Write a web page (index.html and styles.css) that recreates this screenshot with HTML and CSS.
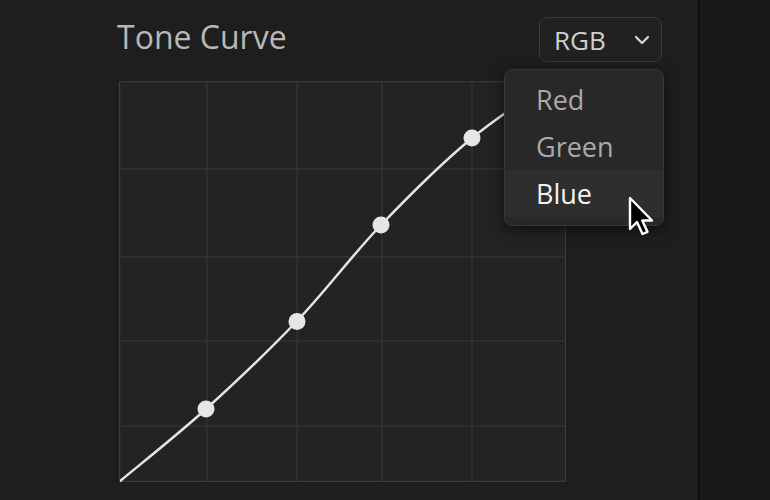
FILE: index.html
```html
<!DOCTYPE html>
<html>
<head>
<meta charset="utf-8">
<link rel="stylesheet" href="styles.css">
</head>
<body>
<div class="app">
  <section class="panel">
    <header class="header">
      <h1 class="title">Tone Curve</h1>
      <button class="select">
        <span class="select-label">RGB</span>
        <svg class="chevron" width="16" height="10" viewBox="0 0 16 10"><path d="M2 2 L8 8 L14 2" fill="none" stroke="#d8d8d8" stroke-width="2.2" stroke-linecap="round" stroke-linejoin="round"/></svg>
      </button>
    </header>
    <div class="graph">
      <svg width="450" height="403" viewBox="117 80 450 403">
        <defs>
          <clipPath id="clip"><rect x="120" y="82" width="446" height="400"/></clipPath>
        </defs>
        <rect x="117.5" y="80.5" width="449" height="402" fill="#232323" stroke="#131313"/>
        <rect x="119.5" y="81.5" width="446" height="400" fill="none" stroke="#3a3a3a" stroke-width="1.5"/>
        <g stroke="#333333" stroke-width="1.5">
          <line x1="207" y1="82" x2="207" y2="481"/>
          <line x1="297" y1="82" x2="297" y2="481"/>
          <line x1="382" y1="82" x2="382" y2="481"/>
          <line x1="472" y1="82" x2="472" y2="481"/>
          <line x1="120" y1="169" x2="565" y2="169"/>
          <line x1="120" y1="257" x2="565" y2="257"/>
          <line x1="120" y1="341" x2="565" y2="341"/>
          <line x1="120" y1="426" x2="565" y2="426"/>
        </g>
        <path clip-path="url(#clip)" d="M119 482 C134.3 469 176.5 435.7 206 409 C235.5 382.3 267.8 351.7 297 321 C326.2 290.3 351.8 255.5 381 225 C410.2 194.5 442.2 162.8 472 138 C501.8 113.2 545.3 86.3 560 76" fill="none" stroke="#e4e4e4" stroke-width="2.5" stroke-linecap="round"/>
        <g fill="#e6e6e6">
          <circle cx="206" cy="409" r="8.5"/>
          <circle cx="297" cy="321.5" r="8.5"/>
          <circle cx="381" cy="225" r="8.5"/>
          <circle cx="472" cy="138" r="8.5"/>
        </g>
      </svg>
    </div>
    <ul class="menu">
      <li class="menu-item">Red</li>
      <li class="menu-item">Green</li>
      <li class="menu-item is-active">Blue</li>
    </ul>
    <svg class="cursor" width="26" height="42" viewBox="0 0 26 42">
      <path d="M2 2 L2 33 L9 26 L14.5 38 L19.5 35.8 L14.2 24.5 L24 24.5 Z" fill="#000" stroke="#fff" stroke-width="2.4" stroke-linejoin="round"/>
    </svg>
  </section>
  <aside class="side"></aside>
</div>
</body>
</html>
```
FILE: styles.css
```css
html, body {
  margin: 0;
  padding: 0;
  background: #161616;
}
body {
  font-family: "Open Sans", "Noto Sans", sans-serif;
  width: 770px;
  height: 500px;
  overflow: hidden;
}
.app {
  display: flex;
  height: 500px;
}
.panel {
  position: relative;
  width: 700px;
  box-sizing: border-box;
  padding: 17px 0 0 117px;
  background: #1e1e1e;
  border-right: 2px solid #101010;
}
.side {
  flex: 1;
  background: #171717;
  border-left: 2px solid #1b1b1b;
}
.header {
  display: flex;
  justify-content: space-between;
  align-items: center;
  width: 545px;
  height: 45px;
}
.title {
  margin: 0;
  font-size: 32px;
  font-weight: 400;
  color: #b8b8b8;
  position: relative;
  top: -3px;
}
.select {
  display: flex;
  align-items: center;
  justify-content: space-between;
  box-sizing: border-box;
  width: 123px;
  height: 45px;
  padding: 0 11px 0 14px;
  background: #212121;
  border: 1.5px solid #3a3a3a;
  border-radius: 8px;
  font-family: inherit;
  font-size: 26px;
  color: #cfcfcf;
}
.select-label {
  line-height: 1;
}
.chevron {
  display: block;
}
.graph {
  margin-top: 18px;
  width: 450px;
  height: 403px;
}
.graph svg {
  display: block;
}
.menu {
  position: absolute;
  left: 504px;
  top: 69px;
  width: 160px;
  box-sizing: border-box;
  margin: 0;
  padding: 6px 0 8px;
  list-style: none;
  background: #282828;
  border: 1px solid #363636;
  border-radius: 8px;
  box-shadow: 0 4px 14px rgba(0, 0, 0, 0.55);
}
.menu-item {
  height: 47px;
  line-height: 47px;
  padding-left: 31px;
  font-size: 27px;
  color: #a9a9a9;
}
.menu-item.is-active {
  color: #f4f4f4;
  background: #2e2e2e;
}
.cursor {
  position: absolute;
  left: 628px;
  top: 196px;
}
```
